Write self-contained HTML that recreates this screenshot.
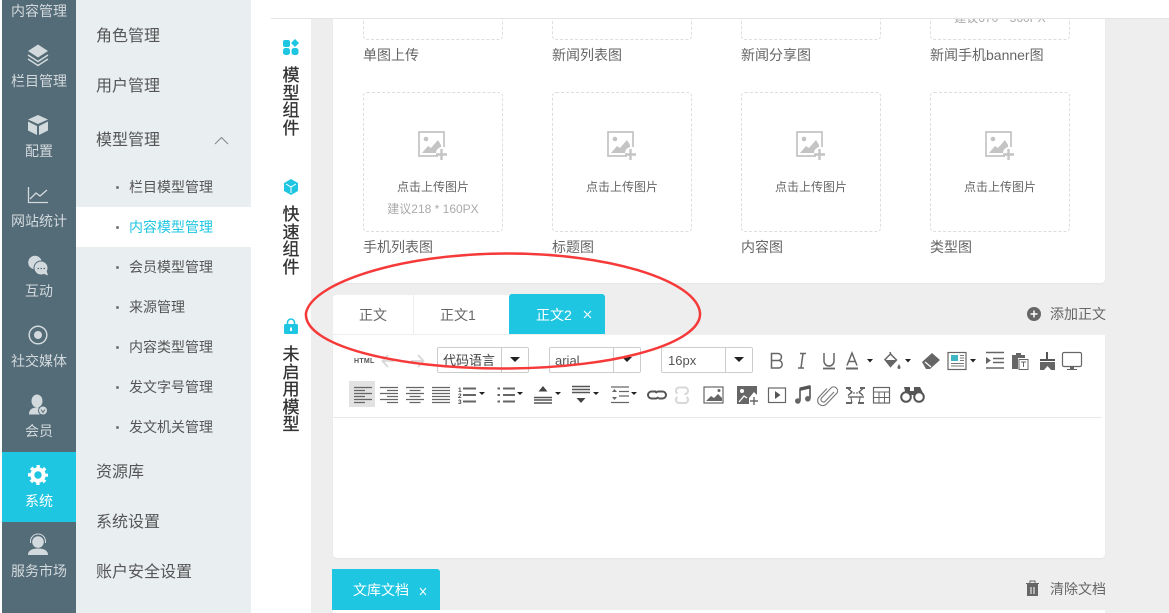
<!DOCTYPE html>
<html><head><meta charset="utf-8">
<style>
*{box-sizing:border-box}
html,body{margin:0;padding:0;width:1169px;height:613px;overflow:hidden;background:#fff;font-family:"Liberation Sans","Noto Sans CJK SC",sans-serif;color:#666}
.a{position:absolute;white-space:nowrap}
#s{left:2px;top:0;width:74px;height:613px;background:#546b78}
.si{position:absolute;left:2px;width:74px;text-align:center;font-size:14px;color:#d3dadd;line-height:20px}
#m{left:76px;top:0;width:175px;height:613px;background:#e9eef1}
.m1{position:absolute;left:96px;font-size:16px;line-height:24px;color:#555}
.m2{position:absolute;left:129px;font-size:14px;line-height:20px;color:#555}
.dot{position:absolute;left:116px;width:3px;height:3px;background:#777;border-radius:50%}
.box{position:absolute;width:140px;height:140px;border:1px dashed #ddd;border-radius:4px;background:#fff}
.lb{position:absolute;font-size:14px;line-height:20px;color:#666}
.up{position:absolute;width:140px;text-align:center;font-size:12px;color:#666;line-height:16px}
.v{position:absolute;left:281px;width:20px;font-size:17px;line-height:17.5px;color:#333;text-align:center;white-space:normal;-webkit-text-stroke:.3px #333}
svg{position:absolute;overflow:visible}
</style></head><body>
<!-- backgrounds -->
<div class="a" style="left:311px;top:19px;width:858px;height:594px;background:#eee"></div>
<div class="a" style="left:333px;top:19px;width:772px;height:264px;background:#fff;border-radius:0 0 4px 4px;box-shadow:0 1px 1px #e6e6e6"></div>

<div class="a" id="s"></div>
<div class="a" style="left:2px;top:452px;width:74px;height:70px;background:#1fc6e2"></div>
<div class="si" style="top:1px">内容管理</div>
<div class="si" style="top:71px">栏目管理</div>
<div class="si" style="top:141px">配置</div>
<div class="si" style="top:211px">网站统计</div>
<div class="si" style="top:281px">互动</div>
<div class="si" style="top:351px">社交媒体</div>
<div class="si" style="top:421px">会员</div>
<div class="si" style="top:491px;color:#fff">系统</div>
<div class="si" style="top:561px">服务市场</div>

<!-- sidebar icons -->
<svg style="left:0;top:0" width="76" height="613" fill="#d3dadd">
<path d="M38 44.500l10 6.500-10 6.500-10-6.500z"/>
<path d="M28 55l10 6.500 10-6.500" fill="none" stroke="#d3dadd" stroke-width="1.500"/>
<path d="M28 59l10 6.500 10-6.500" fill="none" stroke="#d3dadd" stroke-width="1.500"/>
<path d="M38 115l10 4.500-10 4.500-10-4.500z"/>
<path d="M28 121.500l9 4.500v9l-9-4.500zM48 121.500l-9 4.500v9l9-4.500z"/>
<path d="M28.500 187v15.500h19.500" fill="none" stroke="#d3dadd" stroke-width="1.300"/>
<path d="M30 199l6-6 4 3 7-6" fill="none" stroke="#d3dadd" stroke-width="1.300"/>
<circle cx="35" cy="262.500" r="6.800"/>
<circle cx="41" cy="268" r="7" stroke="#546b78" stroke-width="1"/>
<path d="M44 274l4 1.500-1.500-5z"/>
<path d="M37.500 268.500h1.500M40.500 268.500h1.500M43.500 268.500h1.500" stroke="#546b78" stroke-width="1.300"/>
<circle cx="38" cy="335" r="8.800" fill="none" stroke="#d3dadd" stroke-width="1.500"/>
<circle cx="38" cy="335" r="4"/>
<ellipse cx="37" cy="401" rx="5.500" ry="6.500"/>
<path d="M29 414.500c0-5 3-7 8-7s7 1 8 3v4z"/>
<circle cx="43" cy="410.500" r="4.500" stroke="#546b78"/>
<path d="M41 409.500l2 3 2-3" fill="none" stroke="#546b78" stroke-width="1"/>
<circle cx="38" cy="475" r="5.700" fill="none" stroke="#fff" stroke-width="4"/>
<circle cx="38" cy="475" r="8.500" fill="none" stroke="#fff" stroke-width="3" stroke-dasharray="3.300 3.375" stroke-dashoffset="1.650"/>
<circle cx="38" cy="542" r="5.800"/>
<path d="M30.500 543c-1-12 16-12 15 0" fill="none" stroke="#d3dadd" stroke-width="1"/>
<path d="M28 555c0-5 5-6.500 10-6.500s10 1.500 10 6.500z"/>
</svg>

<div class="a" id="m"></div>
<div class="a" style="left:76px;top:207px;width:175px;height:40px;background:#fff"></div>
<div class="m1" style="top:25px">角色管理</div>
<div class="m1" style="top:75px">用户管理</div>
<div class="m1" style="top:129px">模型管理</div>
<svg style="left:214px;top:136px" width="15" height="9"><path d="M1 8l6.500-6.500L14 8" fill="none" stroke="#888" stroke-width="1.100"/></svg>
<div class="dot" style="top:186px"></div><div class="m2" style="top:177px">栏目模型管理</div>
<div class="dot" style="top:226px"></div><div class="m2" style="top:217px;color:#1fc6e2">内容模型管理</div>
<div class="dot" style="top:266px"></div><div class="m2" style="top:257px">会员模型管理</div>
<div class="dot" style="top:306px"></div><div class="m2" style="top:297px">来源管理</div>
<div class="dot" style="top:346px"></div><div class="m2" style="top:337px">内容类型管理</div>
<div class="dot" style="top:386px"></div><div class="m2" style="top:377px">发文字号管理</div>
<div class="dot" style="top:426px"></div><div class="m2" style="top:417px">发文机关管理</div>
<div class="m1" style="top:461px">资源库</div>
<div class="m1" style="top:511px">系统设置</div>
<div class="m1" style="top:561px">账户安全设置</div>

<!-- vertical column -->
<svg style="left:283px;top:39px" width="16" height="16" fill="#1fc6e2">
<rect x="0" y="1" width="7" height="7" rx="2"/><path d="M12 0l4 4-4 4-4-4z"/><rect x="0" y="9" width="7" height="7" rx="2.500"/><rect x="8.500" y="9" width="7" height="7" rx="2.500"/>
</svg>
<div class="v" style="top:67px">模型组件</div>
<svg style="left:283px;top:179px" width="16" height="16"><path d="M8 0l7 4v8l-7 4-7-4V4z" fill="#1fc6e2"/><path d="M3 5l5 3 5-3M8 8v6" stroke="#fff" fill="none" stroke-width="1"/></svg>
<div class="v" style="top:206px">快速组件</div>
<svg style="left:284px;top:318px" width="14" height="16"><rect x="0" y="6" width="14" height="10" rx="1.500" fill="#1fc6e2"/><path d="M3.500 7V4.500a3.500 3.500 0 0 1 7 0V7" fill="none" stroke="#1fc6e2" stroke-width="1.600"/><rect x="6" y="9.500" width="2" height="3.500" fill="#fff"/></svg>
<div class="v" style="top:346px">未启用模型</div>

<!-- upload boxes -->
<div class="box" style="left:363px;top:-100px"></div>
<div class="box" style="left:552px;top:-100px"></div>
<div class="box" style="left:741px;top:-100px"></div>
<div class="box" style="left:930px;top:-100px"></div>
<div class="a" style="left:333px;top:0;width:772px;height:18px;background:#fff"></div>
<div class="a" style="left:271px;top:18px;width:898px;height:1px;background:#e4e4e4"></div>
<div class="a" style="left:930px;top:19px;width:140px;height:6px;overflow:hidden"><div class="up" style="left:0;top:-9px;color:#aaa">建议670 * 360PX</div></div>
<div class="lb" style="left:363px;top:45px">单图上传</div>
<div class="lb" style="left:552px;top:45px">新闻列表图</div>
<div class="lb" style="left:741px;top:45px">新闻分享图</div>
<div class="lb" style="left:930px;top:45px">新闻手机banner图</div>

<div class="box" style="left:363px;top:92px"></div>
<div class="box" style="left:552px;top:92px"></div>
<div class="box" style="left:741px;top:92px"></div>
<div class="box" style="left:930px;top:92px"></div>
<svg style="left:418px;top:131px" width="30" height="30"><use href="#imgadd"/></svg>
<svg style="left:607px;top:131px" width="30" height="30"><use href="#imgadd"/></svg>
<svg style="left:796px;top:131px" width="30" height="30"><use href="#imgadd"/></svg>
<svg style="left:985px;top:131px" width="30" height="30"><use href="#imgadd"/></svg>
<svg width="0" height="0"><defs><g id="imgadd">
<path d="M20 25H1V1h25v15" fill="none" stroke="#c4c4c4" stroke-width="1.700"/>
<circle cx="8" cy="8" r="2.300" fill="#c4c4c4"/>
<path d="M4 22l6-7 3 2 7-8 3 5v2c-3 1-5 3-5 6z" fill="#c4c4c4"/>
<path d="M23.500 18v11M18 23.500h11" stroke="#c4c4c4" stroke-width="2.400"/>
</g></defs></svg>
<div class="up" style="left:363px;top:179px">点击上传图片</div>
<div class="up" style="left:552px;top:179px">点击上传图片</div>
<div class="up" style="left:741px;top:179px">点击上传图片</div>
<div class="up" style="left:930px;top:179px">点击上传图片</div>
<div class="up" style="left:363px;top:201px;color:#aaa">建议218 * 160PX</div>
<div class="lb" style="left:363px;top:237px">手机列表图</div>
<div class="lb" style="left:552px;top:237px">标题图</div>
<div class="lb" style="left:741px;top:237px">内容图</div>
<div class="lb" style="left:930px;top:237px">类型图</div>

<!-- tabs -->
<div class="a" style="left:333px;top:295px;width:80px;height:39px;background:#fff;border-radius:3px 0 0 0;text-align:center;line-height:40px;font-size:14px;color:#666">正文</div>
<div class="a" style="left:414px;top:295px;width:95px;height:39px;background:#fff;font-size:14px;line-height:40px;color:#666;padding-left:26px">正文1</div>
<div class="a" style="left:509px;top:294px;width:96px;height:40px;background:#1fc6e2;border-radius:3px 3px 0 0;font-size:14px;line-height:42px;color:#fff;padding-left:27px">正文2</div>
<svg style="left:583px;top:310px" width="9" height="9"><path d="M1 1l7 7M8 1l-7 7" stroke="#fff" stroke-width="1.100"/></svg>
<svg style="left:1027px;top:307px" width="14" height="14"><circle cx="7" cy="7" r="7" fill="#666"/><path d="M7 3.500v7M3.500 7h7" stroke="#fff" stroke-width="1.500"/></svg>
<div class="a" style="left:1050px;top:304px;font-size:14px;line-height:20px;color:#666">添加正文</div>

<!-- editor -->
<div class="a" style="left:333px;top:335px;width:772px;height:223px;background:#fff;border-radius:0 0 4px 4px;box-shadow:0 1px 1px #e4e4e4"></div>
<div class="a" style="left:333px;top:417px;width:769px;height:1px;background:#e8e8e8"></div>
<div class="a" style="left:354px;top:357px;font-size:7px;line-height:9px;font-weight:bold;color:#555;letter-spacing:.3px">HTML</div>
<svg style="left:381px;top:354px" width="45" height="14" fill="none" stroke="#d8d8d8" stroke-width="1.800"><path d="M7 1L1.500 7 7 13M2 7h11M37 1l5.500 6L37 13M30 7h12"/></svg>

<div class="a" style="left:437px;top:347px;width:92px;height:26px;border:1px solid #ccc;border-radius:2px;background:#fff;font-size:13px;line-height:25px;padding-left:5px;color:#444">代码语言</div>
<div class="a" style="left:501px;top:348px;width:1px;height:24px;background:#ccc"></div>
<div class="a" style="left:549px;top:347px;width:92px;height:26px;border:1px solid #ccc;border-radius:2px;background:#fff;font-size:13px;line-height:25px;padding-left:5px;color:#555">arial</div>
<div class="a" style="left:613px;top:348px;width:1px;height:24px;background:#ccc"></div>
<div class="a" style="left:661px;top:347px;width:92px;height:26px;border:1px solid #ccc;border-radius:2px;background:#fff;font-size:13px;line-height:25px;padding-left:6px;color:#555">16px</div>
<div class="a" style="left:725px;top:348px;width:1px;height:24px;background:#ccc"></div>
<svg style="left:0;top:0" width="1169" height="613" fill="#222">
<path d="M510 357h10l-5 5zM622 357h10l-5 5zM734 357h10l-5 5z"/>
</svg>

<!-- toolbar row 1 -->
<svg style="left:0;top:0" width="1169" height="613" fill="#666" stroke="none">
<g fill="none" stroke="#666" stroke-width="1.500">
<path d="M771.500 353.500h6.500a3.500 3.500 0 0 1 0 7H771.500zM771.500 360.500h7.500a3.800 3.800 0 0 1 0 7.500H771.500z"/>
<path d="M800 353.500h6M798 368h6M803 353.500l-2 14.500"/>
<path d="M824 353v8a5 5 0 0 0 10 0v-8"/><path d="M823 368.500h12" stroke-width="1.800"/>
<path d="M847 365.500l5-12.500 5 12.500M848.500 361.500h7"/><path d="M846 368.500h12" stroke-width="2"/>
</g>
<path d="M867 359h6l-3 3.500zM905 359h6l-3 3.500zM970 359h6l-3 3.500z" fill="#222"/>
<path d="M885 359.500l5.500-5.500 6 6-6 6.500z" fill="none" stroke="#666" stroke-width="1.500"/>
<path d="M886 360h10l-5.500 6z"/>
<path d="M890 352l1 3" stroke="#666" stroke-width="1.500"/>
<path d="M899 364c-1 2-1.500 2.500-1.500 3.500a1.500 1.500 0 0 0 3 0c0-1-.5-1.500-1.500-3.500z"/>
<path d="M922 362l10-9 8 7-10 9h-4z"/>
<path d="M925 362l6 5" stroke="#fff" stroke-width="1.200"/>
<rect x="948" y="352.500" width="18" height="17" fill="none" stroke="#666" stroke-width="1.200"/>
<rect x="951" y="355" width="7" height="6" fill="#3eb5c2"/>
<path d="M960 355.500h4M960 358h4M960 360.500h4M951 363.500h13M951 366h13" stroke="#777" stroke-width="1"/>
<path d="M986 352.500h18M993 358.500h11M993 362.500h11M986 368h18" stroke="#666" stroke-width="1.500"/>
<path d="M986 357l5 3.500-5 3.500z"/>
<path d="M1012 355h4v-2h5v2h4v3h-7v11h-6z"/>
<rect x="1019" y="359.500" width="9" height="10" fill="#fff" stroke="#666"/>
<path d="M1021 362h5M1023.500 362v5" stroke="#666"/>
<path d="M1047 352v7M1040 360h15" stroke="#555" stroke-width="2"/>
<path d="M1040 362h15v8h-4l-3.500-4-3.500 4h-4z"/>
<rect x="1062.500" y="352.500" width="19" height="14" rx="1.500" fill="none" stroke="#666" stroke-width="1.200"/>
<path d="M1070 367h4v2h-4zM1067 369h10v1h-10z"/>
</svg>

<!-- toolbar row 2 -->
<div class="a" style="left:349px;top:381px;width:26px;height:26px;background:#e2e2e2"></div>
<svg style="left:0;top:0" width="1169" height="613" fill="#666">
<g stroke="#666" stroke-width="1.300" fill="none">
<path d="M354 387.500h18M354 390.500h11M354 393.500h18M354 396.500h11M354 399.500h18M354 402.500h11"/>
<path d="M380 387.500h18M387 390.500h11M380 393.500h18M387 396.500h11M380 399.500h18M387 402.500h11"/>
<path d="M406 387.500h18M409.500 390.500h11M406 393.500h18M409.500 396.500h11M406 399.500h18M409.500 402.500h11"/>
<path d="M432 387.500h18M432 390.500h18M432 393.500h18M432 396.500h18M432 399.500h18M432 402.500h18"/>
</g>
<path d="M463 388.500h13M463 395h13M463 401.500h13M503 388.500h12M503 395h12M503 401.500h12" stroke="#666" stroke-width="2"/>
<text x="458" y="392" font-size="6.500" font-weight="bold" font-family="Liberation Sans" fill="#444">1</text>
<text x="458" y="398" font-size="6.500" font-weight="bold" font-family="Liberation Sans" fill="#444">2</text>
<text x="458" y="404" font-size="6.500" font-weight="bold" font-family="Liberation Sans" fill="#444">3</text>
<path d="M497.500 388.500h2.500M497.500 395h2.500M497.500 401.500h2.500" stroke="#666" stroke-width="2"/>
<path d="M534 397.500h18M534 400h18M534 403h18" stroke="#555" stroke-width="1.500"/>
<path d="M543 386l4.500 5.500h-9z" fill="#444"/>
<path d="M572 386.500h18M572 389.500h18M572 392.500h18" stroke="#555" stroke-width="1.500"/>
<path d="M581 403l-4.500-5h9z" fill="#444"/>
<path d="M611 387h18M619 391.500h10M619 396h10M611 402.500h18" stroke="#666" stroke-width="1.300" fill="none"/>
<path d="M612 392l2.500-3 2.500 3zM612 397l2.500 3 2.500-3z"/>
<path d="M479 392h6l-3 3zM517 392h6l-3 3zM555 392h6l-3 3zM593 392h6l-3 3zM631 392h6l-3 3z" fill="#222"/>
<!-- link -->
<path d="M656 392.500h-4.500a3.500 3.500 0 0 0 0 7h4a4 4 0 0 0 3-1.500M658.500 399.500h4a3.500 3.500 0 0 0 0-7h-4a4 4 0 0 0-3 1.500" transform="translate(0 -1)" fill="none" stroke="#555" stroke-width="2"/>
<path d="M684.500 394a3.300 3.300 0 0 0 1-6.500h-7a3.300 3.300 0 0 0-1 6M677.500 397a3.300 3.300 0 0 0 1 6h7a3.300 3.300 0 0 0 1-6" fill="none" stroke="#d8d8d8" stroke-width="2"/>
<!-- image -->
<rect x="704" y="387" width="19" height="16" fill="none" stroke="#666" stroke-width="1.200"/>
<path d="M706 401l5-5 3 2 4-4 4 4v3z"/><circle cx="719" cy="390.500" r="1.500"/>
<path d="M737 386h20v9l-3-3-5 6v6h-12z"/>
<circle cx="742" cy="391" r="2" fill="#fff"/>
<path d="M739 402l5-6 3 2" stroke="#fff" fill="none" stroke-width="1.300"/>
<path d="M754 397v8M750 401h8" stroke="#666" stroke-width="1.400"/>
<rect x="768.500" y="388" width="17" height="14.500" fill="none" stroke="#666" stroke-width="1.200"/>
<path d="M775 391l5.500 4-5.500 4z" fill="#555"/>
<path d="M800 389l10-2v11.500M800 389v12" fill="none" stroke="#555" stroke-width="1.600"/>
<path d="M799.500 387.500l11-2.500v3.500l-11 2.500z" fill="#555"/>
<circle cx="797.800" cy="401" r="2.800"/><circle cx="807.800" cy="398.800" r="2.800"/>
<path d="M834 391l-9 9.500a2.500 2.500 0 0 1-3.500-3.500l10-10.500a4 4 0 0 1 5.500 5.500l-10.500 11a5 5 0 0 1-7.500-7l8-8.500" fill="none" stroke="#777" stroke-width="1.100" transform="translate(0 1)"/>
<path d="M848 388.500l4 3.500-4 3.500M863 388.500l-4 3.500 4 3.500M848 397h16" fill="none" stroke="#555" stroke-width="1.200"/>
<path d="M846 387h5v2h-5zM860 387h5v2h-5zM846 402h6v2h-6zM858 402h6v2h-6z"/>
<path d="M850 393h10" stroke="#555" stroke-dasharray="2 1"/>
<path d="M851 397c0 3 1 5 1 6M860 397c0 3-1 5-1 6" fill="none" stroke="#555"/>
<rect x="873.500" y="387.500" width="16" height="15.500" fill="none" stroke="#666" stroke-width="1.200"/>
<path d="M873.500 392h16M873.500 397.500h16M879 392v11M884.500 392v11" stroke="#666" fill="none"/>
<path d="M904 387h6v4h4v-4h6l4 8-18 0z" fill="#555"/>
<circle cx="906" cy="397" r="4.800" fill="#fff" stroke="#555" stroke-width="2"/>
<circle cx="919" cy="397" r="4.800" fill="#fff" stroke="#555" stroke-width="2"/>
</svg>

<!-- bottom tab -->
<div class="a" style="left:332px;top:569px;width:108px;height:41px;background:#1fc6e2;border-radius:0 3px 0 0;font-size:14px;line-height:42px;color:#fff;padding-left:21px">文库文档</div>
<svg style="left:419px;top:587px" width="8" height="8"><path d="M1 1l6 7M7 1l-6 7" stroke="#fff" stroke-width="1"/></svg>
<div class="a" style="left:333px;top:610px;width:772px;height:3px;background:#fff"></div>
<svg style="left:1026px;top:580px" width="13" height="16" fill="#666"><rect x="1" y="4" width="11" height="12"/><rect x="0" y="3" width="13" height="1"/><path d="M4 3V1h5v2" fill="none" stroke="#666"/><path d="M5 7v7M8 7v7" stroke="#fff" stroke-width="1"/></svg>
<div class="a" style="left:1050px;top:579px;font-size:14px;line-height:20px;color:#666">清除文档</div>

<!-- red ellipse -->
<svg style="left:0;top:0" width="1169" height="613">
<path d="M306 313C312 283 400 254 505 253.500C610 253 697 281 700 313C702 342 620 368 505 368.500C395 369 303 345 306 313Z" fill="none" stroke="#f63a3a" stroke-width="2.500"/>
</svg>
</body></html>
